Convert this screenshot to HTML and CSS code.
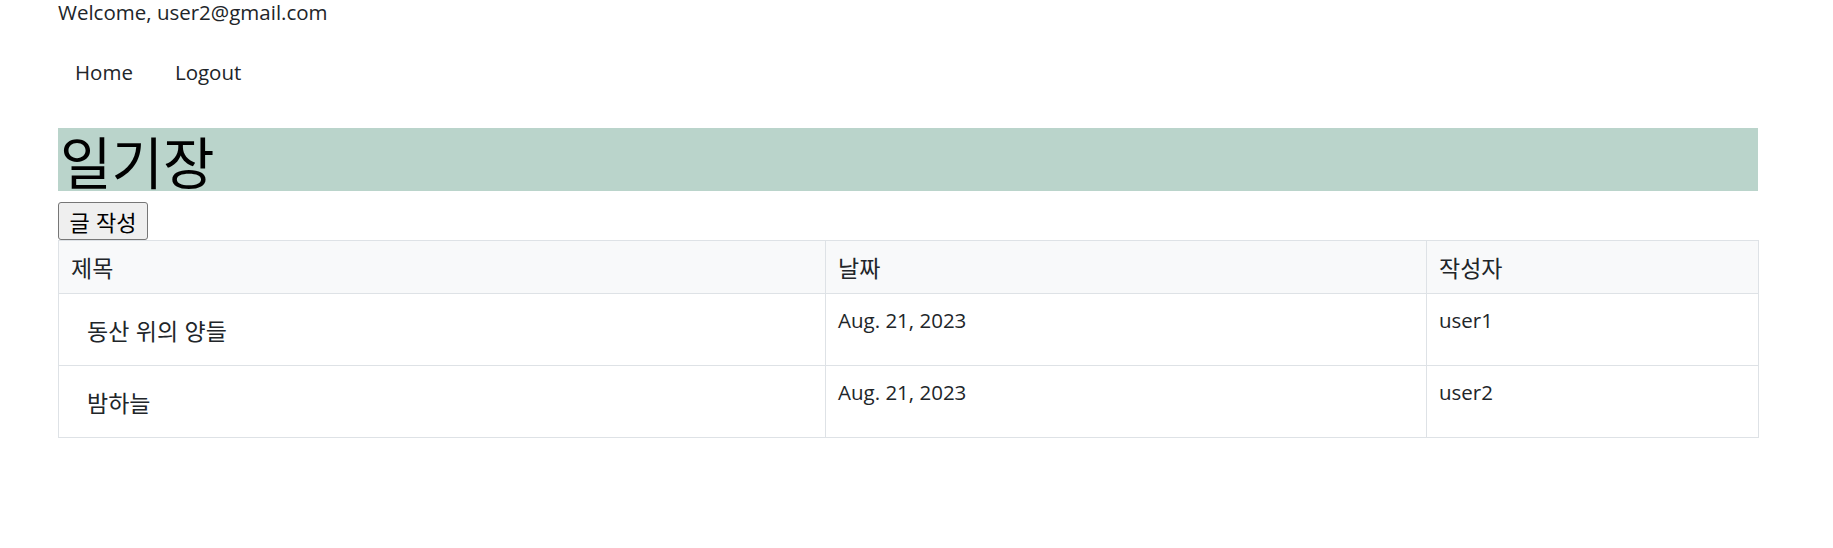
FILE: index.html
```html
<!DOCTYPE html>
<html lang="ko">
<head>
<meta charset="utf-8">
<title>일기장</title>
<link rel="stylesheet" href="styles.css">
</head>
<body>
<div class="page">
  <div class="welcome">Welcome, user2@gmail.com</div>
  <ul class="nav">
    <li><a class="nav-link" href="#">Home</a></li>
    <li><a class="nav-link" href="#">Logout</a></li>
  </ul>
  <h1 class="band">일기장</h1>
  <button class="write-btn" type="button">글 작성</button>
  <table class="list">
    <colgroup>
      <col class="c1"><col class="c2"><col class="c3">
    </colgroup>
    <thead>
      <tr><th>제목</th><th>날짜</th><th>작성자</th></tr>
    </thead>
    <tbody>
      <tr><td><a class="title-link" href="#">동산 위의 양들</a></td><td>Aug. 21, 2023</td><td>user1</td></tr>
      <tr><td><a class="title-link" href="#">밤하늘</a></td><td>Aug. 21, 2023</td><td>user2</td></tr>
    </tbody>
  </table>
</div>
</body>
</html>
```

FILE: styles.css
```css
html, body {
  margin: 0;
  padding: 0;
  background: #ffffff;
}
body {
  font-family: "Open Sans", "Noto Sans CJK KR", sans-serif;
  font-size: 20.5px;
  line-height: 1.5;
  color: #212529;
}
.page {
  padding-left: 58px;
  width: 1700px;
}
.welcome {
  line-height: 24px;
  height: 24px;
}
.nav {
  list-style: none;
  margin: 24px 0 0 -4px;
  padding: 0;
  display: flex;
}
.nav-link {
  display: block;
  padding: 9px 21px;
  line-height: 30px;
  color: #212529;
  text-decoration: none;
}
.band {
  margin: 32px 0 11px 0;
  background: #bad4cb;
  color: #000000;
  font-family: "Noto Sans CJK KR", sans-serif;
  font-weight: 400;
  font-size: 56px;
  line-height: 63px;
  padding-left: 2px;
}
.write-btn {
  display: block;
  margin: 0;
  font-family: "Noto Sans CJK KR", sans-serif;
  font-size: 22px;
  line-height: 27px;
  padding: 4px 8px;
  height: 38px;
  width: 90px;
  color: #000000;
  background: #efefef;
  border: 1px solid #767676;
  border-radius: 3px;
  white-space: nowrap;
}
.list {
  width: 1700px;
  border-collapse: collapse;
  table-layout: fixed;
  vertical-align: top;
}
.c1 { width: 767px; }
.c2 { width: 601px; }
.c3 { width: 332px; }
.list th, .list td {
  border: 1px solid #dee2e6;
  padding: 11px 12px;
  text-align: left;
  font-weight: 400;
  vertical-align: top;
  line-height: 30px;
}
.list th {
  background: #f8f9fa;
  font-family: "Noto Sans CJK KR", sans-serif;
  font-size: 23px;
}
.title-link {
  display: block;
  padding: 10px 16px 9px 16px;
  color: #212529;
  text-decoration: none;
  font-family: "Noto Sans CJK KR", sans-serif;
  font-size: 23px;
}
```
